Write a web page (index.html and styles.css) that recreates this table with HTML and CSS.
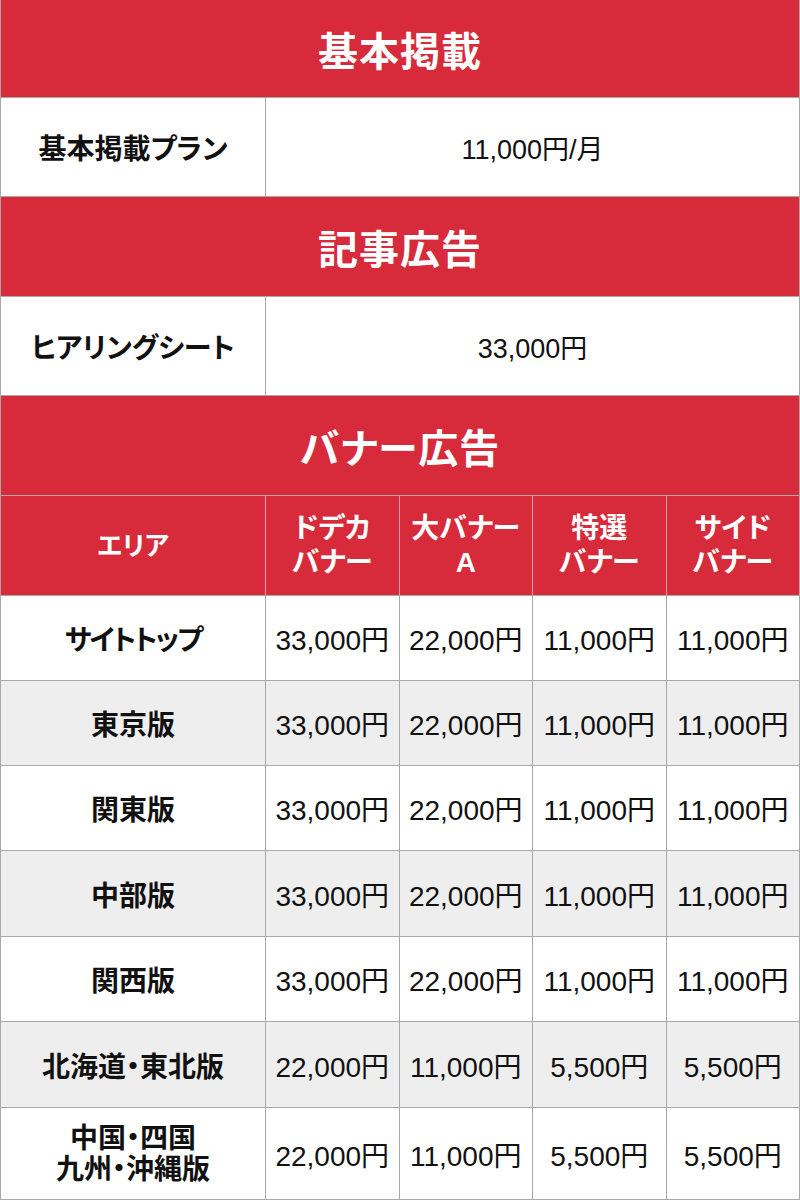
FILE: index.html
```html
<!DOCTYPE html>
<html lang="ja">
<head>
<meta charset="utf-8">
<link rel="stylesheet" href="styles.css">
</head>
<body>
<div class="grid">
  <div class="head full">基本掲載</div>
  <div class="cell label">基本掲載プラン</div>
  <div class="cell val top span4">11,000円/月</div>
  <div class="head full">記事広告</div>
  <div class="cell label">ヒアリングシート</div>
  <div class="cell val top span4">33,000円</div>
  <div class="head full">バナー広告</div>
  <div class="colhead area">エリア</div>
  <div class="colhead">ドデカ<br>バナー</div>
  <div class="colhead">大バナー<br>A</div>
  <div class="colhead">特選<br>バナー</div>
  <div class="colhead">サイド<br>バナー</div>

  <div class="cell label tight">サイトトップ</div>
  <div class="cell val">33,000円</div><div class="cell val">22,000円</div><div class="cell val">11,000円</div><div class="cell val">11,000円</div>

  <div class="cell label alt">東京版</div>
  <div class="cell val alt">33,000円</div><div class="cell val alt">22,000円</div><div class="cell val alt">11,000円</div><div class="cell val alt">11,000円</div>

  <div class="cell label">関東版</div>
  <div class="cell val">33,000円</div><div class="cell val">22,000円</div><div class="cell val">11,000円</div><div class="cell val">11,000円</div>

  <div class="cell label alt">中部版</div>
  <div class="cell val alt">33,000円</div><div class="cell val alt">22,000円</div><div class="cell val alt">11,000円</div><div class="cell val alt">11,000円</div>

  <div class="cell label">関西版</div>
  <div class="cell val">33,000円</div><div class="cell val">22,000円</div><div class="cell val">11,000円</div><div class="cell val">11,000円</div>

  <div class="cell label alt">北海道・東北版</div>
  <div class="cell val alt">22,000円</div><div class="cell val alt">11,000円</div><div class="cell val alt">5,500円</div><div class="cell val alt">5,500円</div>

  <div class="cell label two">中国・四国<br>九州・沖縄版</div>
  <div class="cell val">22,000円</div><div class="cell val">11,000円</div><div class="cell val">5,500円</div><div class="cell val">5,500円</div>
</div>
</body>
</html>
```

FILE: styles.css
```css
html, body {
  margin: 0;
  padding: 0;
  background: #ffffff;
}
.grid {
  display: grid;
  width: 800px;
  box-sizing: border-box;
  border-left: 1px solid #a8a8a8;
  grid-template-columns: 265px repeat(4, 1fr);
  grid-template-rows: 98px 99px 100px 99px 100px 100px 85px 85px 85px 86px 85px 86px 92px;
  font-family: "Liberation Sans", "Noto Sans CJK JP", sans-serif;
  color: #111111;
}
.grid > div {
  display: flex;
  align-items: center;
  justify-content: center;
  text-align: center;
  box-sizing: border-box;
  border-right: 1px solid #a8a8a8;
  border-bottom: 1px solid #a8a8a8;
}
.head {
  grid-column: 1 / -1;
  background: #d72a3b;
  color: #ffffff;
  font-weight: bold;
  font-size: 40px;
  font-feature-settings: "palt";
  letter-spacing: 1px;
}
.colhead {
  background: #d72a3b;
  color: #ffffff;
  font-weight: bold;
  font-size: 28px;
  line-height: 34px;
  font-feature-settings: "palt";
  border-right-color: #e4a0a6 !important;
}
.colhead.area {
  font-size: 26px;
}
.span4 {
  grid-column: 2 / -1;
}
.label {
  font-weight: bold;
  font-size: 28px;
  font-feature-settings: "palt";
}
.tight {
  letter-spacing: -2px;
}
.two {
  line-height: 31px;
}
.val {
  font-size: 28px;
}
.val.top {
  font-size: 27px;
}
.alt {
  background: #eeeeee;
}
```
